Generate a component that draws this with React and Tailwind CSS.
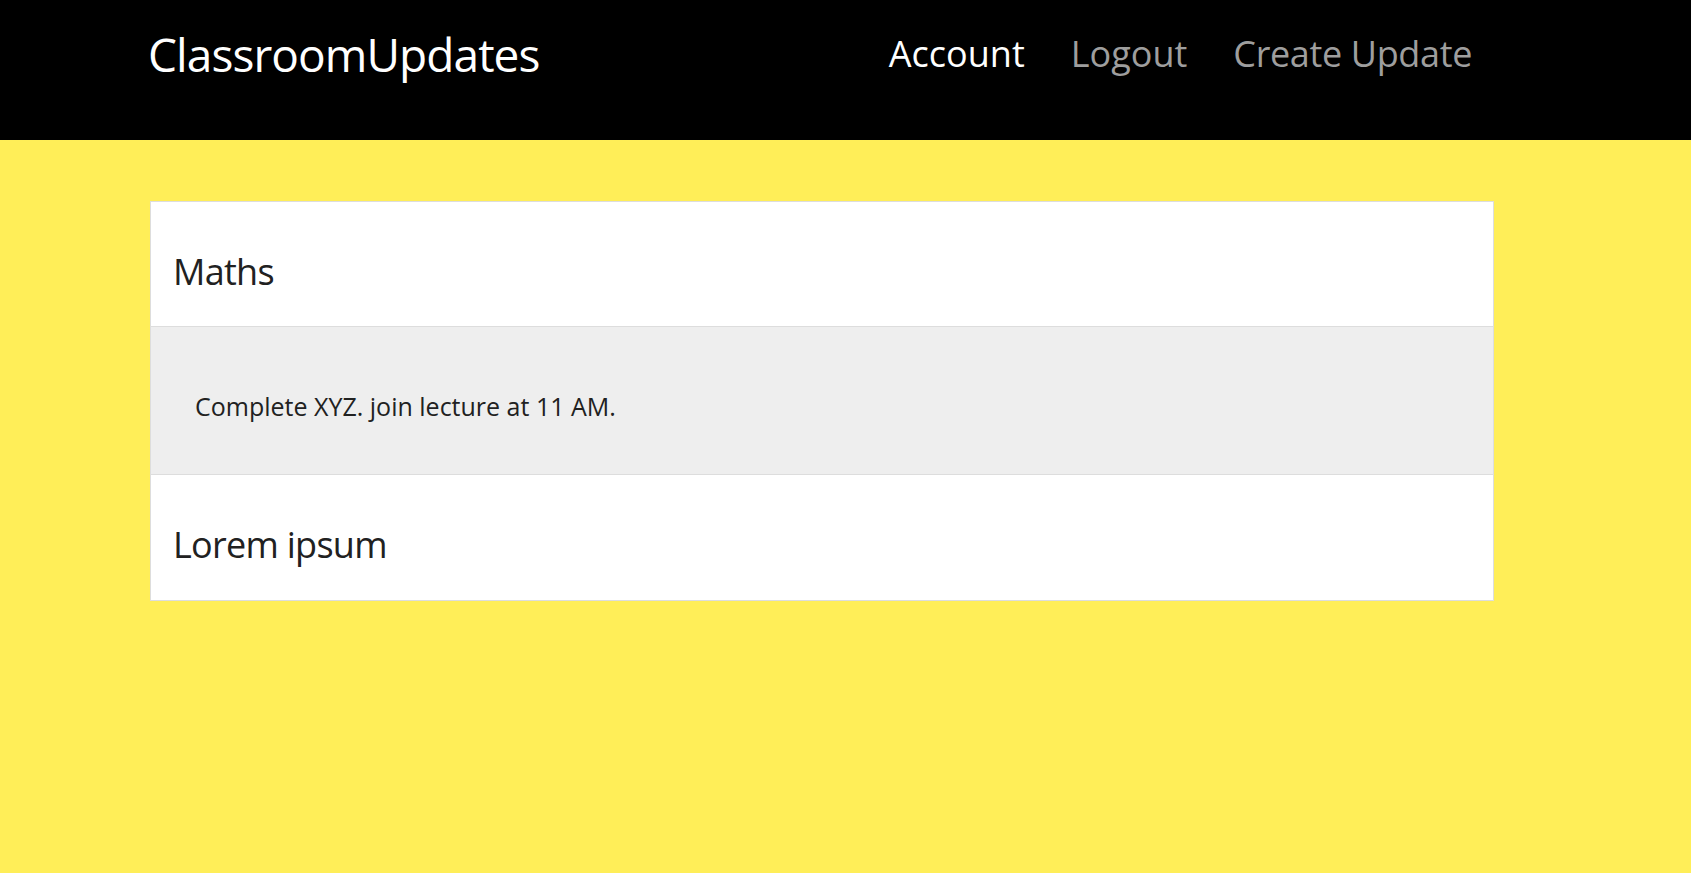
const updates = [
    { id: 1, title: 'Maths', body: 'Complete XYZ. join lecture at 11 AM.', open: true },
    { id: 2, title: 'Lorem ipsum', body: '', open: false },
];

const App = () => {
    return (
        <div className="min-h-screen w-full bg-[#ffee58] font-['Open_Sans','Noto_Sans',sans-serif]">
            <nav className="h-[140px] bg-black">
                <div className="ml-[148px] w-[1346px] pt-[22px] flex items-start justify-between leading-[64px]">
                    <a href="#" className="text-[46px] tracking-[-0.02em] text-white">ClassroomUpdates</a>
                    <ul className="flex text-[36px]">
                        <li><a href="#" className="block pl-[28px] pr-[23px] text-white">Account</a></li>
                        <li><a href="#" className="block px-[23px] text-[#9e9e9e]">Logout</a></li>
                        <li><a href="#" className="block pl-[23px] pr-[22px] tracking-[-0.01em] text-[#9e9e9e]">Create Update</a></li>
                    </ul>
                </div>
            </nav>

            <div className="ml-[150px] w-[1344px] mt-[61px]">
                <ul className="border border-[#ddd] bg-white">
                    {updates.map((u, i) => (
                        <li key={u.id}>
                            <div className={`h-[125px] pt-[42px] px-[22px] text-[36px] tracking-[-0.02em] leading-[55px] text-[#212121] ${i < updates.length - 1 || u.open ? 'border-b border-[#ddd]' : ''}`}>
                                {u.title}
                            </div>
                            {u.open && (
                                <div className="h-[148px] pt-[61px] px-[44px] bg-[#eee] border-b border-[#ddd] text-[25px] leading-[37px] text-[#212121]">
                                    {u.body}
                                </div>
                            )}
                        </li>
                    ))}
                </ul>
            </div>
        </div>
    );
};

export default App;
